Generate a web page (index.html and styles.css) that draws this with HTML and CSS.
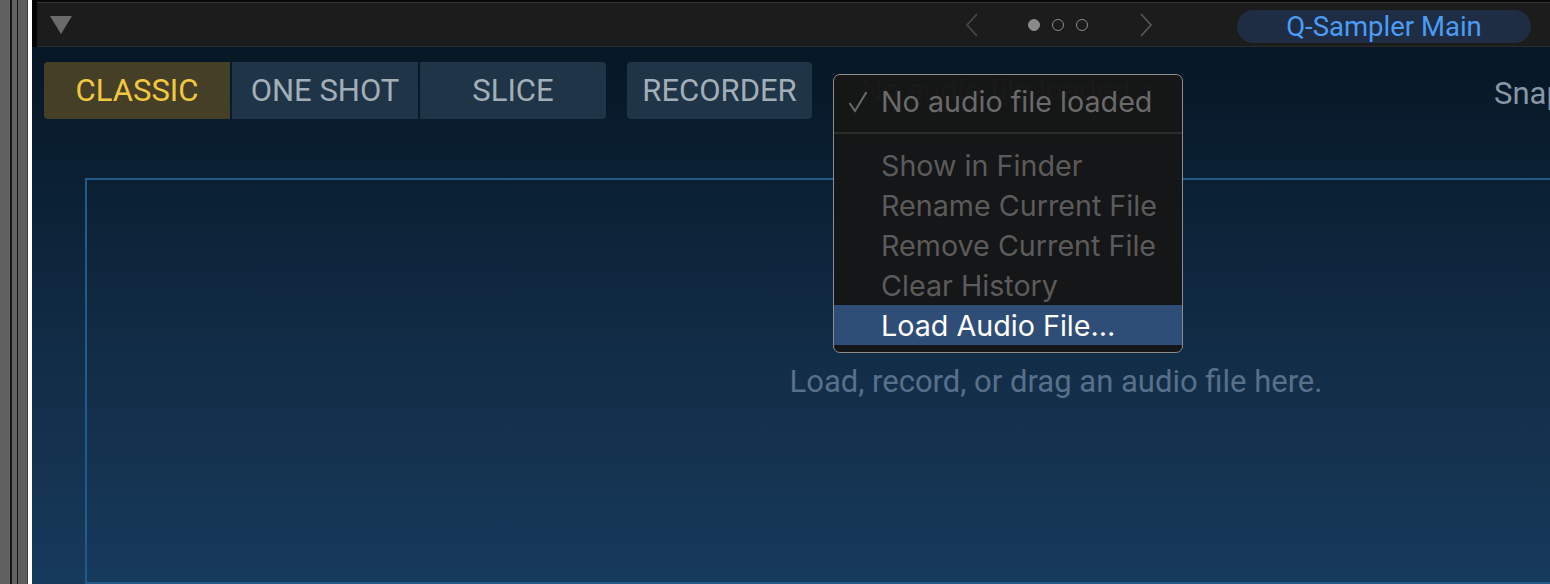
FILE: index.html
```html
<!DOCTYPE html>
<html>
<head>
<meta charset="utf-8">
<link rel="stylesheet" href="styles.css">
</head>
<body>
<div class="frame">
  <div class="rail"></div>
  <div class="gutter"></div>
  <div class="app">
    <div class="topbar">
      <svg class="disclose" width="22" height="18" viewBox="0 0 22 18"><polygon points="0,0 22,0 11,18" fill="#6b6b6b"/></svg>
      <div class="spacer"></div>
      <div class="pager">
        <svg class="chev" width="14" height="24" viewBox="0 0 14 24"><polyline points="12,1 2,12 12,23" fill="none" stroke="#4a4a4a" stroke-width="1.6"/></svg>
        <div class="dots">
          <span class="dot on"></span><span class="dot"></span><span class="dot"></span>
        </div>
        <svg class="chev" width="14" height="24" viewBox="0 0 14 24"><polyline points="2,1 12,12 2,23" fill="none" stroke="#5a5a5a" stroke-width="1.6"/></svg>
      </div>
      <div class="pill">Q-Sampler Main</div>
    </div>
    <div class="main">
      <div class="toolbar">
        <div class="segments">
          <div class="seg active">CLASSIC</div>
          <div class="seg">ONE SHOT</div>
          <div class="seg">SLICE</div>
        </div>
        <div class="btn">RECORDER</div>
        <div class="popup">No audio file loaded <span class="updown">⌃</span></div>
        <div class="snap">Snap to Grid</div>
      </div>
      <div class="dropzone">
        <div class="hint">Load, record, or drag an audio file here.</div>
      </div>
    </div>
  </div>
</div>
<div class="menu">
  <div class="item checked"><svg class="check" width="20" height="22" viewBox="0 0 20 22"><polyline points="1.5,12 7,20 18.5,1" fill="none" stroke="#6a6a6a" stroke-width="2"/></svg>No audio file loaded</div>
  <div class="sep"></div>
  <div class="item">Show in Finder</div>
  <div class="item">Rename Current File</div>
  <div class="item">Remove Current File</div>
  <div class="item">Clear History</div>
  <div class="item hl">Load Audio File…</div>
</div>
</body>
</html>
```

FILE: styles.css
```css
html, body {
  margin: 0;
  padding: 0;
  width: 1550px;
  height: 584px;
  overflow: hidden;
  background: #5f5f5f;
}
.frame {
  display: flex;
  height: 584px;
}
.rail {
  width: 28px;
  flex: none;
  background: linear-gradient(to right,
    #616161 0, #616161 10px,
    #151515 10px, #151515 12px,
    #616161 12px, #616161 17px,
    #151515 17px, #151515 18px,
    #5e5e5e 18px, #5e5e5e 27px,
    #3c3c3c 27px, #3c3c3c 28px);
}
.gutter {
  width: 4px;
  flex: none;
  background: #ffffff;
}
.app {
  flex: 1;
  display: flex;
  flex-direction: column;
  overflow: hidden;
  min-width: 0;
}
.topbar {
  height: 47px;
  flex: none;
  box-sizing: border-box;
  display: flex;
  align-items: center;
  background: #1c1c1c;
  border-left: 5px solid #050505;
  border-top: 2px solid #080808;
  box-shadow: inset 0 1px 0 #333, inset 0 -1px 0 #2a2a2a;
  font-family: Roboto, "Liberation Sans", sans-serif;
}
.disclose {
  margin-left: 13px;
  margin-top: 1px;
}
.spacer { flex: 1; }
.pager {
  display: flex;
  align-items: center;
  margin-right: 84px;
}
.chev { display: block; }
.dots {
  display: flex;
  gap: 12px;
  margin: 0 51px 0 49px;
}
.dot {
  width: 12px;
  height: 12px;
  box-sizing: border-box;
  border-radius: 50%;
  border: 1.6px solid #8a8a8a;
}
.dot.on { background: #8a8a8a; }
.pill {
  width: 294px;
  height: 33px;
  margin-right: 19px;
  margin-top: 3px;
  border-radius: 17px;
  background: #1f2d44;
  color: #4a9cf5;
  font-size: 27.5px;
  line-height: 33px;
  text-align: center;
}
.main {
  flex: 1;
  display: flex;
  flex-direction: column;
  background: linear-gradient(to bottom, #061725 0%, #0a1f31 22%, #102a43 50%, #14324f 75%, #163a5c 100%);
  font-family: Roboto, "Liberation Sans", sans-serif;
  min-height: 0;
}
.toolbar {
  display: flex;
  align-items: flex-start;
  padding: 15px 0 0 12px;
  height: 57px;
  flex: none;
  white-space: nowrap;
}
.segments {
  display: flex;
  flex: none;
  gap: 2px;
  border-radius: 4px;
  overflow: hidden;
}
.seg, .btn {
  width: 186px;
  flex: none;
  height: 57px;
  line-height: 58px;
  text-align: center;
  font-size: 31px;
  background: #1f3446;
  color: #a2aeb8;
}
.seg.active {
  background: #463f27;
  color: #f2c840;
}
.btn {
  width: 185px;
  margin-left: 21px;
  border-radius: 4px;
}
.popup {
  width: 350px;
  flex: none;
  margin-left: 22px;
  margin-top: 12px;
  height: 32px;
  line-height: 32px;
  padding-left: 27px;
  box-sizing: border-box;
  color: #5f6b77;
  font-family: Inter, "Noto Sans", sans-serif;
  font-size: 28.5px;
  overflow: hidden;
}
.updown { font-size: 20px; }
.snap {
  flex: none;
  margin-left: 310px;
  margin-top: 13px;
  color: #8897a4;
  font-size: 31px;
}
.dropzone {
  margin: 59px 0 0 53px;
  width: 1942px;
  height: 406px;
  flex: none;
  box-sizing: border-box;
  border: 2px solid #235a8c;
  display: flex;
  align-items: center;
  justify-content: center;
}
.hint {
  color: #58708a;
  font-size: 31px;
}
.menu {
  position: absolute;
  left: 833px;
  top: 74px;
  width: 350px;
  height: 279px;
  box-sizing: border-box;
  border: 1px solid #8d8d8d;
  border-radius: 7px;
  background: rgba(22, 22, 22, 0.96);
  padding: 6px 0 7px;
  font-family: Inter, "Noto Sans", sans-serif;
  font-size: 28.7px;
  overflow: hidden;
}
.item {
  height: 40px;
  line-height: 42px;
  padding-left: 47px;
  color: #5b5b5b;
  position: relative;
  white-space: nowrap;
}
.item.checked { color: #6a6a6a; }
.check {
  position: absolute;
  left: 14px;
  top: 10px;
}
.sep {
  height: 2px;
  background: #2c2c2c;
  margin: 11px 0;
}
.item.hl {
  background: #2f4e77;
  color: #ffffff;
}
```
